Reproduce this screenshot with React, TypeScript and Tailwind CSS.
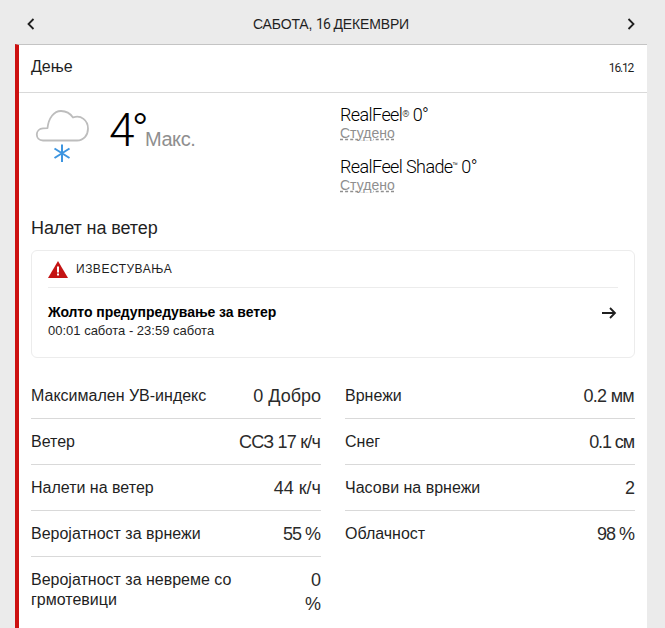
import React from 'react';

const leftRows = [
  { label: 'Максимален УВ-индекс', value: '0 Добро', fit: '' },
  { label: 'Ветер', value: 'ССЗ 17 к/ч', fit: 'tracking-[-0.8px] pr-[1px]' },
  { label: 'Налети на ветер', value: '44 к/ч', fit: '' },
  { label: 'Веројатност за врнежи', value: '55 %', fit: 'tracking-[-1px] pr-[1px]' },
  { label: 'Веројатност за невреме со грмотевици', value: '0 %', fit: '' },
];

const rightRows = [
  { label: 'Врнежи', value: '0.2 мм', fit: 'tracking-[-0.7px] pr-[1px]' },
  { label: 'Снег', value: '0.1 см', fit: 'tracking-[-1.1px] pr-[1px]' },
  { label: 'Часови на врнежи', value: '2', fit: '' },
  { label: 'Облачност', value: '98 %', fit: 'tracking-[-1px] pr-[1px]' },
];

const Chevron = ({ flip }: { flip?: boolean }) => (
  <svg width="10" height="14" viewBox="0 0 10 14" fill="none" stroke="#1f1f1f" strokeWidth="1.8" className={flip ? 'rotate-180' : ''}>
    <path d="M7.5 2 L2.5 7 L7.5 12" />
  </svg>
);

const CloudSnow = () => (
  <svg width="60" height="60" viewBox="0 0 60 60" fill="none" className="shrink-0">
    <path
      d="M12 35.5 C8 35.5 5.8 32.6 5.8 29.6 C5.8 26.2 8.4 23.6 12 23.4 C13.5 23.3 15 23.2 16.5 23.2 C17.5 13 23 6 30 6 C35 6 39.5 8.8 42 12.5 C50 9.5 57 15.5 57 23.5 C57 30.5 52.5 35.5 46 35.5 Z"
      stroke="#bdbdbd"
      strokeWidth="1.8"
      strokeLinejoin="round"
    />
    <path d="M31 39.5 V57 M23.5 43.5 L38.5 53 M38.5 43.5 L23.5 53" stroke="#3d95e0" strokeWidth="2" />
  </svg>
);

const Row = ({ label, value, fit, last }: { label: string; value: string; fit: string; last?: boolean }) => (
  <div className={`flex justify-between items-start gap-4 pt-[11px] pb-[10px] ${last ? '' : 'border-b border-[#d9d9d9]'}`}>
    <span className="pt-[2px] text-[16px] leading-[20px] text-[#1f1f1f]">{label}</span>
    <span className={`text-[18px] leading-[24px] text-right text-[#2b2b2b] ${fit}`}>{value}</span>
  </div>
);

export default function App() {
  return (
    <div className="w-[665px] h-[628px] overflow-hidden bg-[#ebebeb] font-['Liberation_Sans',sans-serif] text-[#1f1f1f]">
      <div className="h-[44px] pl-[26px] pr-[29px] pt-[4px] flex items-center justify-between">
        <Chevron />
        <span className="text-[14px] tracking-[-0.15px]">САБОТА, <span className="font-['Roboto'] tracking-[-1px]">16</span> ДЕКЕМВРИ</span>
        <Chevron flip />
      </div>
      <div className="ml-[15px] w-[632px] h-[584px] bg-white border-l-[4px] border-[#cc1010] border-t border-t-[#c4c4c4]">
        <div className="h-[48px] pl-[12px] pr-[13px] pb-[4px] flex items-center justify-between border-b border-[#d9d9d9]">
          <span className="text-[16px]">Дење</span>
          <span className="font-['Roboto'] text-[12px] tracking-[-1.2px] pt-[2px] pr-[1px]">16.12</span>
        </div>
        <div className="flex pl-[12px] pt-[11px]">
          <div className="w-[309px] flex items-start">
            <div className="mt-[1px]">
              <CloudSnow />
            </div>
            <div className="ml-[18px] flex items-end -mt-[2px]">
              <span className="font-['Roboto'] text-[46px] leading-[56px] font-light text-black tracking-[-3px]">4°</span>
              <span className="text-[20px] leading-[28px] tracking-[-0.4px] text-[#8f8f8f] mb-[5px] ml-[-1px]">Макс.</span>
            </div>
          </div>
          <div className="flex flex-col gap-[15px]">
            <div>
              <div className="font-['Roboto'] text-[18px] leading-[22px] font-light tracking-[-0.6px] text-black">RealFeel<sup className="text-[9px]">®</sup> 0°</div>
              <div className="text-[14px] leading-[15px] text-[#8f8f8f] underline decoration-dashed">Студено</div>
            </div>
            <div>
              <div className="font-['Roboto'] text-[18px] leading-[22px] font-light tracking-[-0.6px] text-black">RealFeel Shade<sup className="text-[9px]">™</sup> 0°</div>
              <div className="text-[14px] leading-[15px] text-[#8f8f8f] underline decoration-dashed">Студено</div>
            </div>
          </div>
        </div>
        <div className="pl-[12px] pr-[12px] mt-[23px]">
          <div className="text-[18px] leading-[24px] tracking-[-0.1px]">Налет на ветер</div>
          <div className="mt-[10px] h-[108px] border border-[#ececec] rounded-[6px] px-[16px]">
            <div className="h-[37px] flex items-center border-b border-[#ececec]">
              <svg width="20" height="17" viewBox="0 0 20 17">
                <path d="M10 0 L20 17 H0 Z" fill="#c41414" />
                <rect x="9" y="5.5" width="2" height="6" fill="#fff" />
                <rect x="9" y="12.5" width="2" height="2" fill="#fff" />
              </svg>
              <span className="ml-[8px] text-[12px] tracking-[0.5px]">ИЗВЕСТУВАЊА</span>
            </div>
            <div className="flex items-start justify-between pt-[15px]">
              <div>
                <div className="text-[14px] leading-[18px] font-bold text-black tracking-[-0.07px]">Жолто предупредување за ветер</div>
                <div className="text-[13px] leading-[17px] pt-[1px]">00:01 сабота - 23:59 сабота</div>
              </div>
              <svg width="16" height="14" viewBox="0 0 16 14" fill="none" stroke="#1f1f1f" strokeWidth="1.8" className="mr-[1px] mt-[3px]">
                <path d="M1 7 H14 M9 2 L14 7 L9 12" />
              </svg>
            </div>
          </div>
          <div className="mt-[15px] grid grid-cols-2 gap-x-[24px]">
            <div>
              {leftRows.map((row, i) => (
                <Row key={row.label} label={row.label} value={row.value} fit={row.fit} last={i === leftRows.length - 1} />
              ))}
            </div>
            <div>
              {rightRows.map((row, i) => (
                <Row key={row.label} label={row.label} value={row.value} fit={row.fit} last={i === rightRows.length - 1} />
              ))}
            </div>
          </div>
        </div>
      </div>
    </div>
  );
}
